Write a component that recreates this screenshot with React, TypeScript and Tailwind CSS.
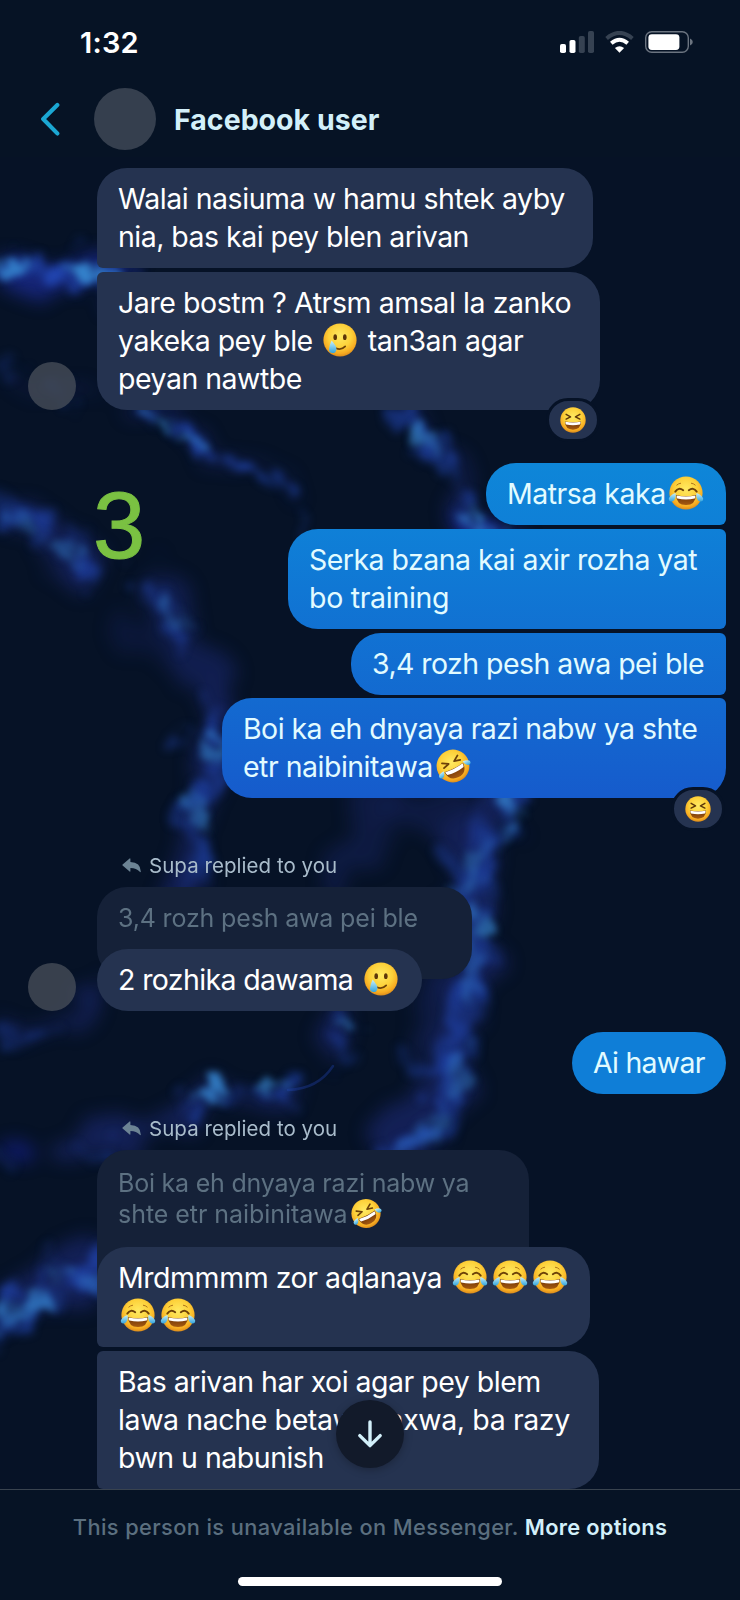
import type { ReactNode } from "react";

function FaceDefs() {
  return (
    <svg className="absolute size-0" aria-hidden="true">
      <defs>
        <radialGradient id="face" cx="0.5" cy="0.38" r="0.62">
          <stop offset="0" stopColor="#ffea62" />
          <stop offset="0.55" stopColor="#fdd13a" />
          <stop offset="0.85" stopColor="#f7ab21" />
          <stop offset="1" stopColor="#d98a1c" />
        </radialGradient>
        <linearGradient id="mouth" x1="0" y1="0" x2="0" y2="1">
          <stop offset="0" stopColor="#6b3208" />
          <stop offset="1" stopColor="#a65a10" />
        </linearGradient>
        <linearGradient id="tear" x1="0" y1="0" x2="0" y2="1">
          <stop offset="0" stopColor="#c8f0fb" />
          <stop offset="1" stopColor="#35a5dd" />
        </linearGradient>
      </defs>
    </svg>
  );
}

const emojiClass = "mx-[2px] inline-block h-[34px] w-[36px] align-[-6px]";

function Joy() {
  return (
    <svg className={emojiClass} viewBox="0 0 36 34">
      <circle cx="18" cy="17" r="16.6" fill="url(#face)" />
      <path d="M8.5 9.3 Q10.5 7.4 13 7.2 M27.5 9.3 Q25.5 7.4 23 7.2" stroke="#b0741a" strokeWidth="1" fill="none" />
      <path d="M7.3 15.6 Q10.6 10.8 15.2 14.2 M28.7 15.6 Q25.4 10.8 20.8 14.2" stroke="#6d4108" strokeWidth="1.9" fill="none" strokeLinecap="round" />
      <path d="M8 19 Q18 21.4 28 19 Q27.6 29 18 29 Q8.4 29 8 19Z" fill="url(#mouth)" />
      <path d="M8.6 19.4 Q18 21.7 27.4 19.4 Q27.4 22 26.6 22.6 Q18 24.5 9.4 22.6 Q8.6 22 8.6 19.4Z" fill="#fff" />
      <path d="M7.6 17 Q8.4 23.8 4.4 25.4 Q0.6 26 0.8 22.6 Q2 19 7.6 17Z M28.4 17 Q27.6 23.8 31.6 25.4 Q35.4 26 35.2 22.6 Q34 19 28.4 17Z" fill="url(#tear)" />
    </svg>
  );
}

function Rofl({ small = false }: { small?: boolean }) {
  return (
    <svg
      className={small ? "mx-[2px] -my-2 inline-block h-[31px] w-[32px] align-[2px]" : emojiClass}
      viewBox="0 0 36 34"
    >
      <g transform="rotate(-27 18 17)">
        <circle cx="18" cy="17" r="16.4" fill="url(#face)" />
        <path d="M9.4 9.6 L15 13.2 L9 14.8 M26.8 9.6 L21.2 13.2 L27.2 14.8" stroke="#6d4108" strokeWidth="1.8" fill="none" strokeLinecap="round" strokeLinejoin="round" />
        <path d="M7.6 18.6 Q18 20.4 28.4 18.6 Q28 29.4 18 29.4 Q8 29.4 7.6 18.6Z" fill="url(#mouth)" />
        <path d="M8.2 19 Q18 20.8 27.8 19 Q27.8 22 27 22.6 Q18 24.4 9 22.6 Q8.2 22 8.2 19Z" fill="#fff" />
        <path d="M7.4 17.4 Q6.4 23 3 23.2 Q0 22.8 0.8 20 Q2.4 17.4 7.4 17.4Z M28.6 17.4 Q29.6 23 33 23.2 Q36 22.8 35.2 20 Q33.6 17.4 28.6 17.4Z" fill="url(#tear)" />
      </g>
    </svg>
  );
}

function SmileTear() {
  return (
    <svg className={emojiClass} viewBox="0 0 36 34">
      <circle cx="18" cy="17" r="16.6" fill="url(#face)" />
      <ellipse cx="13.2" cy="14.2" rx="1.8" ry="2.9" fill="#5d3609" />
      <ellipse cx="22.8" cy="14.2" rx="1.8" ry="2.9" fill="#5d3609" />
      <path d="M14 25.3 Q19.2 27.6 23.2 23.4" stroke="#6d4108" strokeWidth="1.7" fill="none" strokeLinecap="round" />
      <path d="M9.6 17.6 Q14.6 23.2 14.4 26.4 Q14 30 10.6 30 Q7 29.8 7 26.4 Q7.2 22.6 9.6 17.6Z" fill="url(#tear)" />
    </svg>
  );
}

function Laughing() {
  return (
    <svg className="size-[26px]" viewBox="0 0 34 34">
      <circle cx="17" cy="17" r="16.6" fill="url(#face)" />
      <path d="M8 9.6 L13.8 12.8 L8 15.8 M26 9.6 L20.2 12.8 L26 15.8" stroke="#5d3609" strokeWidth="1.9" fill="none" strokeLinecap="round" strokeLinejoin="round" />
      <path d="M6.4 19 Q17 21 27.6 19 Q27 29.6 17 29.6 Q7 29.6 6.4 19Z" fill="url(#mouth)" />
      <path d="M7 19.4 Q17 21.4 27 19.4 Q27 22.4 26 23 Q17 24.8 8 23 Q7 22.4 7 19.4Z" fill="#fff" />
    </svg>
  );
}

function Wallpaper() {
  return (
    <svg className="absolute inset-0 h-[1600px] w-[740px]" viewBox="0 0 740 1600" fill="none" aria-hidden="true">
      <defs>
        <filter id="haze" x="0" y="0" width="740" height="1600" filterUnits="userSpaceOnUse" colorInterpolationFilters="sRGB">
          <feTurbulence type="fractalNoise" baseFrequency="0.02" numOctaves="5" seed="4" result="n" />
          <feDisplacementMap in="SourceGraphic" in2="n" scale="70" xChannelSelector="R" yChannelSelector="G" />
          <feGaussianBlur stdDeviation="9" />
        </filter>
        <filter id="vein" x="-10" y="-10" width="760" height="1620" filterUnits="userSpaceOnUse" colorInterpolationFilters="sRGB">
          <feTurbulence type="fractalNoise" baseFrequency="0.03" numOctaves="6" seed="9" result="n" />
          <feDisplacementMap in="SourceGraphic" in2="n" scale="60" xChannelSelector="R" yChannelSelector="G" result="d" />
          <feColorMatrix in="n" type="matrix" values="0 0 0 0 0  0 0 0 0 0  0 0 0 0 0  0 0 2.4 0 -0.6" result="m" />
          <feComposite in="d" in2="m" operator="in" />
          <feGaussianBlur stdDeviation="4.5" />
        </filter>
        <filter id="core" x="-10" y="-10" width="760" height="1620" filterUnits="userSpaceOnUse" colorInterpolationFilters="sRGB">
          <feTurbulence type="fractalNoise" baseFrequency="0.045" numOctaves="6" seed="2" result="n" />
          <feDisplacementMap in="SourceGraphic" in2="n" scale="40" xChannelSelector="R" yChannelSelector="G" result="d" />
          <feColorMatrix in="n" type="matrix" values="0 0 0 0 0  0 0 0 0 0  0 0 0 0 0  0 0 2.6 0 -0.6" result="m" />
          <feComposite in="d" in2="m" operator="in" />
          <feGaussianBlur stdDeviation="3.6" />
        </filter>
      </defs>
      <g filter="url(#haze)" stroke="#172462" strokeLinecap="round" opacity="0.8">
        <path d="M-10 275 H110" strokeWidth="38" stroke="#1a2a8c" />
        <path d="M145 405 L205 445" strokeWidth="14" />
        <path d="M205 445 L240 465 L300 500" strokeWidth="7" />
        <path d="M395 405 L440 450 L470 520" strokeWidth="18" />
        <path d="M470 518 L500 530" strokeWidth="24" stroke="#1a2a9c" />
        <path d="M-5 508 L45 533 L90 563" strokeWidth="34" />
        <path d="M145 575 L175 620 L212 680" strokeWidth="34" opacity="0.8" />
        <path d="M130 640 L190 655" strokeWidth="30" opacity="0.4" />
        <path d="M215 680 L212 750 L194 830 L186 885" strokeWidth="26" />
        <path d="M500 790 L465 860 L475 960 L455 1060 L440 1100 L390 1150" strokeWidth="46" />
        <path d="M370 800 L360 850 L335 870" strokeWidth="44" opacity="0.6" />
        <path d="M400 810 L470 830" strokeWidth="54" opacity="0.6" />
        <path d="M440 1000 L445 1060" strokeWidth="50" opacity="0.6" />
        <path d="M0 1034 L60 1026 L97 992" strokeWidth="14" />
        <path d="M340 1010 L330 1060" strokeWidth="24" />
        <path d="M290 1088 L200 1096 L150 1130 L70 1152" strokeWidth="26" />
        <path d="M-5 1320 L50 1280 L100 1265" strokeWidth="50" />
        <path d="M-5 1150 L16 1158" strokeWidth="22" stroke="#141f84" />
        <path d="M5 360 L50 385 L97 388" strokeWidth="8" />
      </g>
      <g filter="url(#vein)" transform="translate(2 5)" stroke="#2145b0" strokeLinecap="round">
        <path d="M-5 268 H24 M62 262 L115 272" strokeWidth="32" />
        <path d="M142 406 L175 428 L208 446 M226 450 L248 464" strokeWidth="14" />
        <path d="M250 465 L290 490 M293 515 L300 540" strokeWidth="7" opacity="0.8" />
        <path d="M390 406 L420 425 L440 455 L455 485 L470 512 L498 532" strokeWidth="15" opacity="0.85" />
        <path d="M0 503 L35 520 M45 535 L90 560" strokeWidth="27" opacity="0.65" />
        <path d="M145 575 L160 600 L178 622" strokeWidth="20" opacity="0.5" />
        <path d="M172 738 L222 745 M212 700 L212 790" strokeWidth="14" opacity="0.6" />
        <path d="M192 795 L195 840 L188 880" strokeWidth="26" opacity="0.65" />
        <path d="M505 785 L500 830 L465 855 L472 910 L476 950 L465 1000 L455 1055" strokeWidth="34" opacity="0.65" />
        <path d="M400 1052 L450 1072 M456 1060 L445 1100 L425 1130 L385 1150" strokeWidth="19" opacity="0.8" />
        <path d="M0 1032 L50 1026" strokeWidth="12" opacity="0.55" />
        <path d="M340 1010 L335 1055 M190 1095 L232 1086 M256 1087 L290 1085" strokeWidth="20" opacity="0.65" />
        <path d="M-5 1320 L30 1298 L60 1275 L105 1268" strokeWidth="34" opacity="0.75" />
        <path d="M0 1148 L12 1152 M80 1150 L110 1143" strokeWidth="16" opacity="0.4" />
        <path d="M45 393 L78 392 M0 360 L16 362" strokeWidth="12" opacity="0.5" />
      </g>
      <path d="M288 1090 Q318 1089 333 1066" stroke="#1d3fa4" strokeWidth="2.5" opacity="0.4" strokeLinecap="round" />
      <g filter="url(#core)" transform="translate(2 5)" stroke="#3482cb" strokeLinecap="round">
        <path d="M2 260 L16 262 M78 260 L104 272" strokeWidth="20" />
        <path d="M148 410 L162 416 M188 432 L204 440" strokeWidth="10" opacity="0.65" />
        <path d="M420 428 L432 440 M463 504 L472 512 M480 525 L498 532" strokeWidth="13" opacity="0.7" />
        <path d="M8 506 L32 520 M50 540 L72 550" strokeWidth="17" opacity="0.45" />
        <path d="M164 600 L178 620" strokeWidth="14" opacity="0.4" />
        <path d="M202 742 L218 745 M186 798 L202 802 M192 816 L207 818" strokeWidth="16" opacity="0.6" />
        <path d="M506 794 L508 826 M476 914 L480 924" strokeWidth="20" opacity="0.75" />
        <path d="M480 845 L462 880 M474 940 L466 990 M456 1050 L453 1088 M440 1112 L405 1146" strokeWidth="20" opacity="0.4" />
        <path d="M202 1090 L224 1082" strokeWidth="17" opacity="0.9" />
        <path d="M264 1086 L282 1084 M338 1012 L350 1016" strokeWidth="9" opacity="0.7" />
        <path d="M0 1316 L42 1292" strokeWidth="17" opacity="0.75" />
        <path d="M50 1275 L70 1265 M82 1276 L100 1282" strokeWidth="14" opacity="0.4" />
      </g>
    </svg>
  );
}

function StatusBar() {
  return (
    <div className="flex h-[84px] items-center justify-between pr-[47px] pl-[80px]">
      <span className="mt-[2px] text-[29px] leading-[38px] font-semibold tracking-[0.2px] text-white">1:32</span>
      <div className="flex items-center gap-[11px]">
        <svg className="h-[22px] w-[34px]" viewBox="0 0 34 22">
          <rect x="0" y="13" width="6" height="9" rx="1.8" fill="#fff" />
          <rect x="9.5" y="9" width="6" height="13" rx="1.8" fill="#fff" />
          <rect x="18.8" y="5" width="6" height="17" rx="1.8" fill="#364252" />
          <rect x="28" y="0" width="6" height="22" rx="1.8" fill="#364252" />
        </svg>
        <svg className="h-[22px] w-[29px]" viewBox="0 0 29 22" fill="none">
          <path d="M1.6 7.4 Q14.5 -3.6 27.4 7.4" stroke="#364252" strokeWidth="4" />
          <path d="M6.3 12.2 Q14.5 5.4 22.7 12.2" stroke="#fff" strokeWidth="4" />
          <path d="M14.5 21.8 L9.9 17 Q14.5 13.4 19.1 17Z" fill="#fff" />
        </svg>
        <svg className="h-[22px] w-[48px]" viewBox="0 0 48 22">
          <rect x="0.7" y="0.7" width="42.6" height="20.6" rx="6" fill="none" stroke="#6b7480" strokeWidth="1.4" />
          <rect x="3.4" y="3.2" width="31" height="15.8" rx="3.4" fill="#fff" />
          <path d="M45 7.5 Q47.8 8.6 47.8 11 Q47.8 13.4 45 14.5Z" fill="#6b7480" />
        </svg>
      </div>
    </div>
  );
}

function Header() {
  return (
    <div className="flex h-[73px] items-start pt-[4px] pl-[40px]">
      <svg className="mt-[14px] h-[34px] w-[20px]" viewBox="0 0 20 34" fill="none">
        <path d="M17.3 3 L3.2 17 L17.3 31.4" stroke="#1ba7d3" strokeWidth="4.2" strokeLinecap="round" strokeLinejoin="round" />
      </svg>
      <div className="ml-[34px] size-[62px] rounded-full bg-[#353f4e]" />
      <h1 className="mt-[13px] ml-[18px] text-[28.5px] leading-[38px] font-bold tracking-[0.02px] whitespace-nowrap text-[#d3f0fa]">
        Facebook user
      </h1>
    </div>
  );
}

function Line({ children, className = "" }: { children: ReactNode; className?: string }) {
  return <span className={`block whitespace-nowrap ${className}`}>{children}</span>;
}

function Bubble({ className, children }: { className: string; children: ReactNode }) {
  return (
    <div className={`relative px-[21px] pt-[12.4px] pb-[11.6px] text-[28.5px] leading-[38px] tracking-[-0.5px] ${className}`}>
      {children}
    </div>
  );
}

function Reaction({ className }: { className: string }) {
  return (
    <div className={`absolute flex h-[44px] w-[54px] items-center justify-center rounded-full border-[3px] border-[#061226] bg-[#253350] ${className}`}>
      <Laughing />
    </div>
  );
}

function ReplyLabel({ className }: { className: string }) {
  return (
    <div className={`ml-[122px] flex h-[24px] items-center gap-[8px] text-[20.5px] leading-[24px] tracking-[0.04px] text-[#a9bccb] ${className}`}>
      <svg className="h-[15px] w-[19px]" viewBox="0 0 19 15">
        <path d="M7.6 0.4 Q8.4 0 8.4 1 V4 Q18.6 4.2 18.8 13.6 Q18.8 14.8 17.8 13.8 Q14.6 10 8.4 10 V13 Q8.4 14 7.6 13.4 L0.6 7.6 Q0 7 0.6 6.4Z" fill="#6c8394" />
      </svg>
      <span className="whitespace-nowrap">Supa replied to you</span>
    </div>
  );
}

export default function App() {
  return (
    <div className="relative flex h-[1600px] w-[740px] flex-col overflow-hidden bg-[#061226] font-['Inter',sans-serif]">
      <FaceDefs />
      <Wallpaper />
      <header className="relative bg-[#061325]">
        <StatusBar />
        <Header />
      </header>

      <main className="relative flex h-[1332px] flex-col pt-[11px]">
        <Bubble className="ml-[97px] w-[496px] rounded-[30px] rounded-bl-[6px] bg-[#253350] text-white">
          <Line className="tracking-[-0.46px]">Walai nasiuma w hamu shtek ayby</Line>
          <Line className="tracking-[-0.52px]">nia, bas kai pey blen arivan</Line>
        </Bubble>
        <div className="mt-[4px] flex items-end gap-[21px] pl-[28px]">
          <div className="size-[48px] rounded-full bg-[#4a505b]/75" />
          <Bubble className="w-[503px] rounded-[30px] rounded-tl-[6px] bg-[#253350] text-white">
            <Line className="tracking-[-0.43px]">Jare bostm ? Atrsm amsal la zanko</Line>
            <Line>
              yakeka pey ble <SmileTear /> tan3an agar
            </Line>
            <Line>peyan nawtbe</Line>
            <Reaction className="right-0 -bottom-[32px]" />
          </Bubble>
        </div>

        <div className="relative mt-[53px] flex flex-col items-end gap-[4px] pr-[14px] text-[#e2fbff]">
          <span className="absolute top-[8px] left-[93px] font-['Liberation_Sans',sans-serif] text-[94px] leading-[110px] text-[#7ac142] [-webkit-text-stroke:1px_#7ac142]">
            3
          </span>
          <Bubble className="w-[240px] rounded-[30px] rounded-br-[6px] bg-linear-to-b from-[#0e86d8] to-[#0f80d7]">
            <Line>
              Matrsa kaka
              <Joy />
            </Line>
          </Bubble>
          <Bubble className="w-[438px] rounded-l-[30px] rounded-r-[6px] bg-linear-to-b from-[#0f80d7] to-[#1171d2]">
            <Line className="tracking-[-0.53px]">Serka bzana kai axir rozha yat</Line>
            <Line className="tracking-[-0.3px]">bo training</Line>
          </Bubble>
          <Bubble className="w-[375px] rounded-l-[30px] rounded-r-[6px] bg-linear-to-b from-[#1172d3] to-[#136ad0]">
            <Line className="tracking-[-0.57px]">3,4 rozh pesh awa pei ble</Line>
          </Bubble>
          <Bubble className="-mt-px w-[504px] rounded-[30px] rounded-tr-[6px] bg-linear-to-b from-[#136ad0] to-[#165bcc]">
            <Line className="tracking-[-0.55px]">Boi ka eh dnyaya razi nabw ya shte</Line>
            <Line>
              etr naibinitawa
              <Rofl />
            </Line>
            <Reaction className="right-[1px] -bottom-[33px]" />
          </Bubble>
        </div>

        <ReplyLabel className="mt-[56px]" />
        <div className="mt-[9px] ml-[97px] h-[92px] w-[375px] rounded-[30px] bg-[#152138] px-[21px] pt-[16px] text-[25px] leading-[31px] text-[#5d7182]">
          <Line className="tracking-[-0.16px]">3,4 rozh pesh awa pei ble</Line>
        </div>
        <div className="relative -mt-[30px] flex items-end gap-[21px] pl-[28px]">
          <div className="size-[48px] rounded-full bg-[#4a505b]/75" />
          <Bubble className="w-[325px] rounded-[31px] bg-[#253350] text-white">
            <Line className="tracking-[-0.63px]">
              2 rozhika dawama <SmileTear />
            </Line>
          </Bubble>
        </div>

        <Bubble className="mt-[21px] mr-[14px] w-[154px] self-end rounded-[31px] bg-[#0f7ed7] text-[#e2fbff]">
          <Line className="tracking-[-0.75px]">Ai hawar</Line>
        </Bubble>

        <ReplyLabel className="mt-[23px]" />
        <div className="mt-[9px] ml-[97px] h-[127px] w-[432px] rounded-t-[30px] bg-[#152138] px-[21px] pt-[18.4px] text-[25px] leading-[30.5px] text-[#5d7182]">
          <Line className="tracking-[-0.21px]">Boi ka eh dnyaya razi nabw ya</Line>
          <Line className="tracking-[-0.05px]">
            shte etr naibinitawa
            <Rofl small />
          </Line>
        </div>
        <Bubble className="-mt-[30px] ml-[97px] w-[493px] rounded-[30px] rounded-bl-[6px] bg-[#253350] text-white">
          <Line className="tracking-[-0.45px]">
            Mrdmmmm zor aqlanaya <Joy />
            <Joy />
            <Joy />
          </Line>
          <Line>
            <Joy />
            <Joy />
          </Line>
        </Bubble>
        <Bubble className="mt-[4px] ml-[97px] w-[502px] rounded-r-[30px] rounded-l-[6px] bg-[#253350] text-white">
          <Line className="tracking-[-0.5px]">Bas arivan har xoi agar pey blem</Line>
          <Line className="tracking-[-0.39px]">lawa nache betawanaxwa, ba razy</Line>
          <Line>bwn u nabunish</Line>
        </Bubble>

        <button className="absolute bottom-[21px] left-[336px] flex size-[68px] items-center justify-center rounded-full bg-[#121a2a] shadow-[0_2px_8px_rgba(0,0,0,0.25)]">
          <svg className="h-[28px] w-[26px]" viewBox="0 0 26 28" fill="none">
            <path d="M13 2 V25.6 M2.8 15.6 L13 25.6 L23.2 15.6" stroke="#d3f0fa" strokeWidth="3.4" strokeLinecap="round" strokeLinejoin="round" />
          </svg>
        </button>
      </main>

      <footer className="relative flex h-[111px] flex-col items-center border-t border-[#39434f] bg-[#061325]">
        <p className="mt-[23px] text-[21.8px] leading-[28px] font-medium tracking-[0.4px] whitespace-nowrap text-[#5b6f7f]">
          This person is unavailable on Messenger.{" "}
          <span className="font-semibold tracking-[0.3px] text-[#d3f0fa]">More options</span>
        </p>
        <div className="mt-[36px] h-[9px] w-[264px] rounded-full bg-white" />
      </footer>
    </div>
  );
}
